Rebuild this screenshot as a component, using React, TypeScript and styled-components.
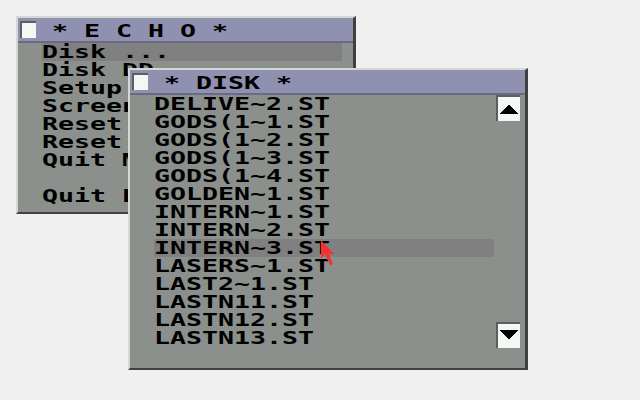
import React from 'react'
import styled, { createGlobalStyle } from 'styled-components'

const Global = createGlobalStyle`
  body {
    margin: 0;
    background: #f0f0f0;
  }
`

const Desktop = styled.div`
  position: relative;
  width: 640px;
  height: 400px;
  overflow: hidden;
  background: #f0f0f0;
  font-family: "DejaVu Sans Mono", "Liberation Mono", monospace;
  color: #000;
`

const Window = styled.div<{ $x: number; $y: number; $w: number; $h: number }>`
  position: absolute;
  left: ${p => p.$x}px;
  top: ${p => p.$y}px;
  width: ${p => p.$w}px;
  height: ${p => p.$h}px;
  box-sizing: border-box;
  display: flex;
  flex-direction: column;
  background: #8c908c;
  border-top: 2px solid #d4d8d4;
  border-left: 2px solid #d4d8d4;
  border-right: 3px solid #404040;
  border-bottom: 2px solid #404040;
`

const TitleBar = styled.div`
  height: 23px;
  flex: none;
  display: flex;
  align-items: flex-start;
  padding-left: 2px;
  background: #9090b0;
  border-bottom: 2px solid #6a6a84;
`

const CloseBox = styled.div`
  width: 16px;
  height: 17px;
  margin-top: 3px;
  box-sizing: border-box;
  background: #f4f8f4;
  border-top: 2px solid #5c605c;
  border-left: 2px solid #5c605c;
`

const TitleText = styled.div`
  margin-left: 16px;
  padding-top: 1px;
  height: 23px;
  line-height: 23px;
`

// 8x8 system font look: wide bold mono glyphs on a 16px pitch
const Label = styled.span`
  display: inline-block;
  font-size: 18px;
  font-weight: bold;
  white-space: pre;
  transform: scaleX(1.4764);
  transform-origin: 0 50%;
`

const Body = styled.div`
  flex: 1;
  display: flex;
  min-height: 0;
`

const List = styled.div<{ $right: number }>`
  flex: 1;
  padding: 0 ${p => p.$right}px 0 24px;
`

const Row = styled.div<{ $sel?: boolean }>`
  height: 18px;
  line-height: 18px;
  background: ${p => (p.$sel ? '#808080' : 'transparent')};
`

const ScrollCol = styled.div`
  width: 24px;
  margin: 0 5px 0 2px;
  padding-bottom: 20px;
  display: flex;
  flex-direction: column;
  justify-content: space-between;
`

const ArrowButton = styled.div`
  width: 24px;
  height: 26px;
  box-sizing: border-box;
  display: flex;
  justify-content: center;
  background: #f4f8f4;
  border-top: 2px solid #5c605c;
  border-left: 2px solid #5c605c;
`

const Cursor = styled.svg`
  position: absolute;
  left: 321px;
  top: 241px;
`

const echoItems = [
  'Disk ...',
  'Disk DD ...',
  'Setup ...',
  'Screen ...',
  'Reset ...',
  'Reset ...',
  'Quit Menu',
  '',
  'Quit Emulator',
]

const files = [
  'DELIVE~2.ST',
  'GODS(1~1.ST',
  'GODS(1~2.ST',
  'GODS(1~3.ST',
  'GODS(1~4.ST',
  'GOLDEN~1.ST',
  'INTERN~1.ST',
  'INTERN~2.ST',
  'INTERN~3.ST',
  'LASERS~1.ST',
  'LAST2~1.ST',
  'LASTN11.ST',
  'LASTN12.ST',
  'LASTN13.ST',
]

const App = () => (
  <Desktop>
    <Global />
    <Window $x={16} $y={16} $w={340} $h={198}>
      <TitleBar>
        <CloseBox />
        <TitleText>
          <Label>* E C H O *</Label>
        </TitleText>
      </TitleBar>
      <Body>
        <List $right={11}>
          {echoItems.map((t, i) => (
            <Row key={i} $sel={i === 0}>
              <Label>{t}</Label>
            </Row>
          ))}
        </List>
      </Body>
    </Window>

    <Window $x={128} $y={68} $w={400} $h={302}>
      <TitleBar>
        <CloseBox />
        <TitleText>
          <Label>* DISK *</Label>
        </TitleText>
      </TitleBar>
      <Body>
        <List $right={0}>
          {files.map((f, i) => (
            <Row key={f} $sel={i === 8}>
              <Label>{f}</Label>
            </Row>
          ))}
        </List>
        <ScrollCol>
          <ArrowButton>
            <svg width="18" height="22" viewBox="0 0 18 22" shapeRendering="crispEdges">
              <polygon points="9,7 18,17 0,17" fill="#000" />
            </svg>
          </ArrowButton>
          <ArrowButton>
            <svg width="18" height="22" viewBox="0 0 18 22" shapeRendering="crispEdges">
              <polygon points="0,6 18,6 9,16" fill="#000" />
            </svg>
          </ArrowButton>
        </ScrollCol>
      </Body>
    </Window>

    <Cursor width="16" height="26" viewBox="0 0 16 26" shapeRendering="crispEdges">
      <polygon points="0,0 0,17 4,13 9,24 12,23 8,13 14,13" fill="#f03434" />
    </Cursor>
  </Desktop>
)

export default App
